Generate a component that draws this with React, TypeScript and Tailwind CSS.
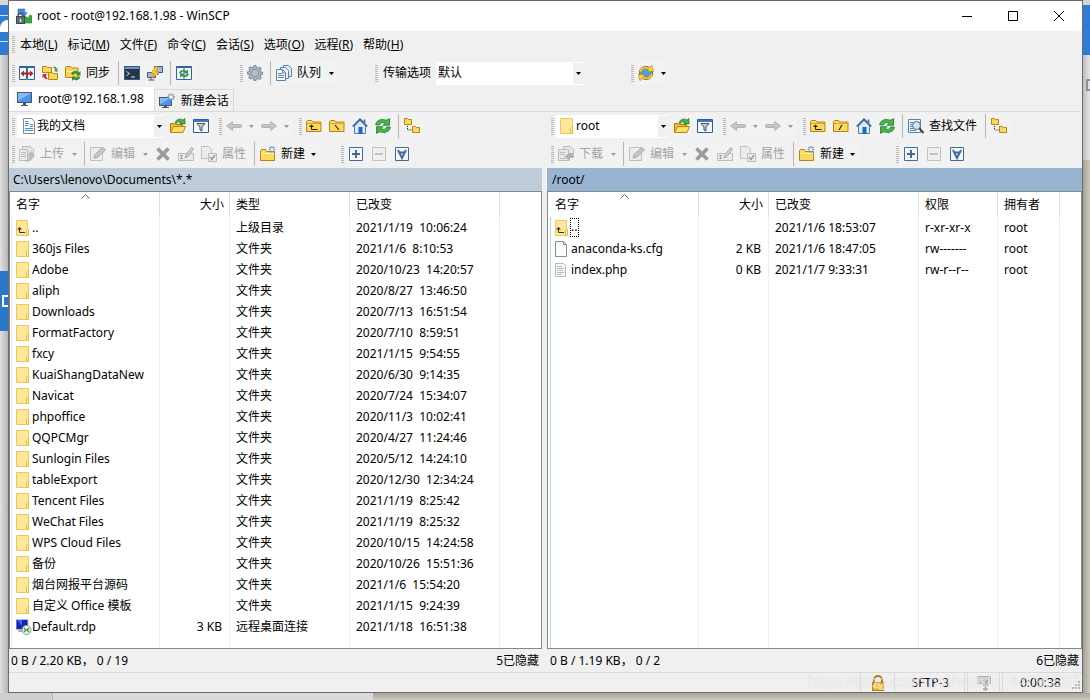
import React, { useState } from "react";

type IconProps = { children: React.ReactNode; className?: string };

const Svg = ({ children, className = "" }: IconProps) => (
  <svg viewBox="0 0 16 16" className={`w-4 h-4 shrink-0 ${className}`} fill="none" aria-hidden="true">
    {children}
  </svg>
);

/* ---------- toolbar drawings ---------- */

const goldFolder = "M.5 13.5V3.5l1-1h4l1.500 1.500h8v9.500z";

const AppIcon = () => (
  <Svg>
    <path d="M2 1h7L8 3l3 2-3 4-4-3-2 1z" fill="#3f8ae0" stroke="#2a69b5" strokeWidth=".6" />
    <path d="M7 9l2-1 3 2 2-3 2 1v7H8l2-2z" fill="#3aa83f" stroke="#237a2b" strokeWidth=".6" />
    <path d="M2 9V7.500a2.500 2.500 0 015 0V9" stroke="#555c66" strokeWidth="1.500" />
    <rect x=".5" y="8.500" width="8" height="7" fill="#616975" stroke="#414852" />
    <path d="M4.500 11v3" stroke="#e8ecf2" strokeWidth="1.500" />
  </Svg>
);
const CompareIcon = () => (
  <Svg>
    <path d="M.5 1.500h7v13h-7zM8.500 1.500h7v13h-7z" fill="#eef5fb" stroke="#31639c" />
    <path d="M.5 2h15" stroke="#31639c" strokeWidth="2" />
    <path d="M3 8.500h10" stroke="#b21f24" strokeWidth="2" />
    <path d="M1.500 8.500L5 5.500v6zM14.500 8.500L11 5.500v6z" fill="#b21f24" />
  </Svg>
);
const SyncBrowseIcon = () => (
  <Svg>
    <path d="M.5 7.500v-6h4l1 1h4v5zM6.500 14.500v-7h4l1 1h4v6z" fill="#f9d75c" stroke="#b98412" />
    <path d="M11 2c2-1 3 0 3.500 1.500l1-.5v4l-3.500-1 1-1c0-1-1-2-2-3z" fill="#43a047" />
    <path d="M1 9l4 0-1 1.500c0 2 1 3 2 3.500-2 .5-4-.5-4.500-2.500L0 13z" fill="#cc2b2b" />
  </Svg>
);
const SyncIcon = () => (
  <Svg>
    <path d="M.5 12.500V2.500l1-1h4l1.500 1.500h6v9.500z" fill="#f9d458" stroke="#b98412" />
    <path d="M2 6.500h10" stroke="#fff1ae" />
    <path d="M6 9c1-3 5-4 8-1.500L15.500 6v4.500H11L12.500 9C10.500 8 9 8.500 8.500 10zM15.500 12c-1 3-4 4-7 2.500L7 16v-4.500h4L9.700 13c1.500.5 2.800 0 3.300-1.500z" fill="#2f8f3b" />
  </Svg>
);
const TerminalIcon = () => (
  <Svg>
    <rect x=".5" y="1.500" width="15" height="13" fill="#24364b" stroke="#3c5a80" />
    <path d="M1 3h14" stroke="#7193b8" strokeWidth="2" />
    <path d="M2.500 6.500l3 2-3 2M7 12h4" stroke="#dce6f1" />
  </Svg>
);
const PuttyIcon = () => (
  <Svg>
    <path d="M7.500 1.500h8v6h-8zM.5 7.500h8v5h-8z" fill="#9dbbe0" stroke="#42597a" />
    <path d="M11 8v2M4 13v2M1.500 15h6" stroke="#42597a" />
    <path d="M8.500 1.500L4 8.500h3.500L4 14.500l8-7.500H8.500l2.500-5z" fill="#ffd62e" stroke="#c98b00" strokeWidth=".7" />
  </Svg>
);
const KeepSyncIcon = () => (
  <Svg>
    <path d="M.5 1.500h15v13H.5z" fill="#eef5fb" stroke="#31639c" />
    <path d="M.5 2h15" stroke="#31639c" strokeWidth="2" />
    <path d="M8 2v12" stroke="#31639c" />
    <path d="M3 8c1-3 5-4 7.500-2L12 4.500v4H8L9 7C7.500 6 5.500 6.500 5 8.500zM13 9c-1 3-4.500 4-7.500 2L4 12.500v-4h4L7 10c1.500 1 3.500.5 4-1.500z" fill="#2f8f3b" />
  </Svg>
);
const GearIcon = () => (
  <Svg>
    <path d="M7 .5h2l.5 2 1.500.7 1.900-1.100 1.500 1.500L13.200 5.500l.6 1.400 2 .4v2l-2 .5-.6 1.400 1.100 1.900-1.500 1.500-1.900-1.100-1.400.6L9 15.600H7l-.5-2-1.500-.6-1.900 1.100-1.500-1.500 1.100-1.900L2.200 9.300l-2-.4V7l2-.5.6-1.400L1.700 3.200l1.500-1.500L5.100 2.800l1.400-.6z" fill="#a9b4c2" stroke="#66758a" strokeWidth=".8" />
    <circle cx="8" cy="8" r="3.500" fill="#c9d1db" stroke="#77869a" />
    <circle cx="8" cy="8" r="1.200" fill="#f7f7f7" stroke="#77869a" strokeWidth=".7" />
  </Svg>
);
const QueueIcon = () => (
  <Svg>
    <path d="M7.500.5h5l3 3v8h-8z" fill="#e7f0f8" stroke="#5b82ab" />
    <path d="M4.500 2.500h5l3 3v8h-8z" fill="#e7f0f8" stroke="#5b82ab" />
    <path d="M.5 4.500h6l3 3v8h-9z" fill="#f3f8fc" stroke="#5b82ab" />
    <path d="M2 8.500h4M2 10.500h6M2 12.500h6M6.500 5v3H9" stroke="#5b82ab" />
  </Svg>
);
const GlobeIcon = () => (
  <Svg>
    <circle cx="8" cy="8" r="6.500" fill="#4c9be8" stroke="#2768ac" />
    <path d="M6 6l3-1 2 2-2 3-3-1z" fill="#59b55c" />
    <path d="M1 7C2 2 7 .5 11.500 2.500L14 .5l1.500 6H9.500l1-2C7 3 4 4 3 7.500z" fill="#ffcf3c" stroke="#b98412" strokeWidth=".7" />
    <path d="M15 9c-1 5-6 6.500-10.500 4.500L2 15.500l-1.500-6h6l-1 2C9 13 12 12 13 8.500z" fill="#ffcf3c" stroke="#b98412" strokeWidth=".7" />
    <path d="M4.500 7.500c2-3 5-2 7 1-2 3-5 2-7-1z" fill="#4c9be8" />
    <path d="M7 6.500l2 .5v2z" fill="#59b55c" />
  </Svg>
);
const ScreenIcon = () => (
  <Svg>
    <rect x=".5" y="1.500" width="14" height="10" fill="#4b94ec" stroke="#4a5665" />
    <path d="M1 2h13L1 10z" fill="#85b8f6" />
    <path d="M6 12h3v2h2v1H4v-1h2z" fill="#4a5665" />
  </Svg>
);
const NewScreenIcon = () => (
  <Svg>
    <rect x=".5" y="4.500" width="12" height="8" fill="#4b94ec" stroke="#4a5665" />
    <path d="M1 5h11L1 11z" fill="#85b8f6" />
    <path d="M5 13h3v1h2v1H3v-1h2z" fill="#4a5665" />
    <path d="M12 0v8M8 4h8M9.200 1.200l5.600 5.600M14.800 1.200L9.200 6.800" stroke="#7e99b8" strokeWidth="1.300" />
    <circle cx="12" cy="4" r="1.800" fill="#fff" />
  </Svg>
);
const DocsIcon = () => (
  <Svg>
    <path d="M2.500.5h8l3 3v12h-11z" fill="#fdfdfd" stroke="#808b96" />
    <path d="M4 3.500h3M4 5.500h4M4 7.500h3M9 6.500h3M9 8.500h3M4 10.500h8M4 12.500h8" stroke="#3296d2" />
  </Svg>
);
const OpenFolderIcon = () => (
  <Svg>
    <path d="M.5 14.500V5.500h4l1 1h7v2" fill="#f0bf32" stroke="#a97d0c" />
    <path d="M.5 14.500l3-6h12l-2.500 6z" fill="#fddf68" stroke="#b98412" />
    <path d="M5 5C6 1 10 0 13 2l2-1.500V6h-5.500L11 4.500C9 3.500 7 4 6.500 5.500z" fill="#4db04f" stroke="#27802f" strokeWidth=".7" />
  </Svg>
);
const FilterIcon = () => (
  <Svg>
    <path d="M.5 1.500h15v13H.5z" fill="#f1f7fd" stroke="#2c5f9e" />
    <path d="M1 3h14" stroke="#3e78bd" strokeWidth="2" />
    <path d="M4 5.500h8L9 9v4l-2-1V9z" fill="#c9cdd2" stroke="#50565e" />
  </Svg>
);
const ArrowLeftIcon = () => (
  <Svg>
    <path d="M.5 8L6.500 3.500V6.500h8q1 0 1 1.500t-1 1.500h-8v3z" fill="#c4c4c4" stroke="#b4b4b4" />
  </Svg>
);
const ArrowRightIcon = () => (
  <Svg>
    <path d="M15.500 8L9.500 3.500V6.500h-8q-1 0-1 1.500t1 1.500h8v3z" fill="#c4c4c4" stroke="#b4b4b4" />
  </Svg>
);
const ParentIcon = () => (
  <Svg>
    <path d={goldFolder} fill="#fbd960" stroke="#b98412" />
    <path d="M1 5.500h14" stroke="#d9a52b" />
    <path d="M5.500 11.500h6M5.500 11.500v-3" stroke="#222" />
    <path d="M3 9l2.500-2.500L8 9z" fill="#222" />
  </Svg>
);
const RootIcon = ({ flip = false }: { flip?: boolean }) => (
  <Svg>
    <path d={goldFolder} fill="#fbd960" stroke="#b98412" />
    <path d="M1 5.500h14" stroke="#d9a52b" />
    <path d={flip ? "M9 7l-3 5" : "M6 7l4 5"} stroke="#222" strokeWidth="1.200" />
  </Svg>
);
const HomeIcon = () => (
  <Svg>
    <path d="M2.500 8L8 2.500 13.500 8v7.500h-11z" fill="#dbeafb" stroke="#5d7fae" />
    <path d="M11.500 1.500h2v4l-2-2z" fill="#5d7fae" />
    <path d="M.7 8.500L8 1.200l7.300 7.300" stroke="#3d5f91" strokeWidth="1.600" />
    <path d="M6.500 9h4v7h-4z" fill="#1d69c2" />
  </Svg>
);
const RefreshIcon = () => (
  <Svg>
    <path d="M.7 7C1 2.500 6 .2 11 2.300L14.500.7v6.600H8L10 5.300C7.500 4 5 4.700 4.500 7z" fill="#45b649" stroke="#1d7d28" strokeWidth=".8" />
    <path d="M15.300 9c-.3 4.500-5.300 6.800-10.300 4.700L1.500 15.300V8.700H8L6 10.700c2.500 1.300 5 .6 5.500-1.700z" fill="#45b649" stroke="#1d7d28" strokeWidth=".8" />
  </Svg>
);
const TreeIcon = () => (
  <Svg>
    <path d="M.5 6.500v-6h3l1 1h3v5zM8.500 14.500v-6h3l1 1h3v5z" fill="#fbd960" stroke="#b98412" />
    <path d="M3.500 8v4H8" stroke="#222" strokeDasharray="1 1" />
  </Svg>
);
const FindIcon = () => (
  <Svg>
    <path d="M.5 1.500h12v13H.5z" fill="#eef4fa" stroke="#5b82ab" />
    <path d="M2 4.500h3M2 6.500h2M2 8.500h2M2 10.500h3M2 12.500h6" stroke="#5b82ab" />
    <circle cx="8.500" cy="7.500" r="4" fill="#cfe3f5" stroke="#59636f" />
    <path d="M11.500 10.500l4 4.500" stroke="#3a4654" strokeWidth="2" />
  </Svg>
);
const TransferIcon = () => (
  <Svg>
    <path d="M3.500.5h8l3 3v8h-11z" fill="#e6e6e6" stroke="#bdbdbd" />
    <path d="M.5 3.500h8v11h-8z" fill="#e9e9e9" stroke="#bdbdbd" />
    <path d="M2 6.500h5M2 8.500h5M2 10.500h5" stroke="#bdbdbd" />
    <path d="M6 14.500c3 0 4-1.500 4-5H8L12 5l4 4.500h-2c0 4.500-3 6.500-8 6z" fill="#bcbcbc" />
  </Svg>
);
const DownloadIcon = () => (
  <Svg>
    <path d="M5.500.5h7l3 3v8h-10z" fill="#e6e6e6" stroke="#bdbdbd" />
    <path d="M.5 3.500h10v11H.5z" fill="#e9e9e9" stroke="#bdbdbd" />
    <path d="M2 6.500h5M2 8.500h5M2 12.500h5" stroke="#bdbdbd" />
    <path d="M15 7v5h-3v3L6 11l5-4z" fill="#b4b4b4" />
  </Svg>
);
const EditIcon = () => (
  <Svg>
    <path d="M.5 1.500h12v13H.5z" fill="#ececec" stroke="#c0c0c0" />
    <path d="M4 12l1-3.500L13 1.500l2.500 2.500L8 11z" fill="#c6c6c6" stroke="#a9a9a9" />
  </Svg>
);
const DeleteIcon = () => (
  <Svg>
    <path d="M2.500 2.500l11 11M13.500 2.500l-11 11" stroke="#9b9b9b" strokeWidth="3.600" />
  </Svg>
);
const RenameIcon = () => (
  <Svg>
    <path d="M.5 7.500h15v7H.5z" fill="#ececec" stroke="#bcbcbc" />
    <path d="M2 9.500h3M3.500 9.500v3M2 12.500h3" stroke="#a5a5a5" />
    <path d="M7 12l1-3 5.500-7.500L15.500 3 10 10.500z" fill="#d2d2d2" stroke="#a9a9a9" />
  </Svg>
);
const PropsIcon = () => (
  <Svg>
    <path d="M.5.500h7l3 3v9H.5z" fill="#ececec" stroke="#c0c0c0" />
    <path d="M7.500 7.500h8v8h-8z" fill="#ececec" stroke="#bcbcbc" />
    <path d="M9 11l2 2.500L14 9" stroke="#999" strokeWidth="1.500" />
  </Svg>
);
const NewFolderIcon = () => (
  <Svg>
    <path d="M.5 14.500V4.500l1-1h4l1 2h8v9z" fill="#fbd960" stroke="#b98412" />
    <path d="M1 7.500h13" stroke="#fff1ae" />
    <path d="M12 0v7M8.500 3.500h7M9.500 1l5 5M14.500 1l-5 5" stroke="#7691b3" strokeWidth="1.200" />
    <circle cx="12" cy="3.500" r="1.500" fill="#fff" />
  </Svg>
);
const BoxIcon = ({ kind }: { kind: "plus" | "minus" | "all" }) => (
  <Svg>
    <path d="M1.500 1.500h13v13h-13z" fill={kind === "minus" ? "#efefef" : "#f2f7fc"} stroke={kind === "minus" ? "#c2c2c2" : "#446a99"} />
    {kind === "plus" && <path d="M4 8h8M8 4v8" stroke="#446a99" strokeWidth="2" />}
    {kind === "minus" && <path d="M4 8h8" stroke="#c2c2c2" strokeWidth="2" />}
    {kind === "all" && <path d="M4 4l4 8 4-8M5 6.500h6" stroke="#446a99" strokeWidth="2" />}
  </Svg>
);

/* ---------- file list drawings ---------- */

const FolderIcon = () => (
  <Svg>
    <path d="M.5.500h12v15H.5z" fill="#ffe699" stroke="#eac95c" />
    <path d="M10.500 15.500v-5l1-1h1v6z" fill="#fff0b8" stroke="#e5bb3c" />
  </Svg>
);
const UpFolderIcon = () => (
  <Svg>
    <path d="M.5.500h11v15H.5z" fill="#ffe699" stroke="#eac95c" />
    <path d="M10.500 15.500v-5l1-1h1v6z" fill="#fff0b8" stroke="#e5bb3c" />
    <path d="M3.500 12.500H9M3.500 12.500V9" stroke="#333" />
    <path d="M1 9.500L3.500 7 6 9.500z" fill="#333" />
  </Svg>
);
const RdpIcon = () => (
  <Svg>
    <rect x="0" y=".5" width="12" height="10" fill="#1326b5" stroke="#b9bfca" />
    <path d="M1 1h5v6z" fill="#3d63ee" />
    <path d="M3 11h5v2H2z" fill="#a5adb9" />
    <circle cx="10.500" cy="11" r="4.500" fill="#eef1ee" stroke="#8f9a93" />
    <path d="M8 9l2 2-2 2M13 9l-2 2 2 2" stroke="#2a9136" strokeWidth="1.200" />
  </Svg>
);
const BlankFileIcon = () => (
  <Svg>
    <path d="M.5.500h8l3 3v12H.5z" fill="#fbfbfb" stroke="#8c8c8c" />
    <path d="M8.500.500v3h3" stroke="#8c8c8c" />
  </Svg>
);
const TextFileIcon = () => (
  <Svg>
    <path d="M.5 1.500h8l2 2v11H.5z" fill="#fbfbfb" stroke="#b9b9b9" />
    <path d="M2 4.500h5M2 6.500h7M2 8.500h6M2 10.500h7M2 12.500h5" stroke="#b3bac2" />
  </Svg>
);

/* ---------- toolbar parts ---------- */

const Grip = ({ className = "" }: { className?: string }) => (
  <span className={`w-[3px] h-[17px] mr-px shrink-0 bg-[repeating-linear-gradient(to_bottom,#b9b9b9_0_1px,transparent_1px_2px)] ${className}`} />
);
const Sep = () => <span className="w-px h-6 ml-[3px] mr-[2px] shrink-0 bg-[#b8b8b8]" />;
const Caret = ({ muted = false }: { muted?: boolean }) => (
  <svg viewBox="0 0 5 3" className="w-[5px] h-[3px] shrink-0" aria-hidden="true">
    <path d="M0 0h5L2.500 3z" fill={muted ? "#9a9a9a" : "#000"} />
  </svg>
);

interface ToolProps {
  icon: React.ReactNode;
  name: string;
  label?: string;
  split?: boolean;
  menu?: boolean;
  disabled?: boolean;
}

function Tool({ icon, name, label, split, menu, disabled }: ToolProps) {
  return (
    <button
      type="button"
      aria-label={name}
      title={name}
      disabled={disabled}
      className={`flex items-center h-6 pl-[3px] pr-1 shrink-0 whitespace-nowrap bg-[#f2f2f2] ${disabled ? "text-[#a3a3a3]" : "text-black"}`}
    >
      {icon}
      {label && <span className="ml-[5px] mr-px">{label}</span>}
      {split && <span className="ml-[7px] flex"><Caret muted={disabled} /></span>}
      {menu && <span className="ml-[5px] flex"><Caret /></span>}
    </button>
  );
}

interface ComboProps {
  name: string;
  value: string;
  icon?: React.ReactNode;
  className: string;
}

function Combo({ name, value, icon, className }: ComboProps) {
  return (
    <label className={`flex items-center h-[23px] bg-white shrink-0 ${className}`}>
      {icon}
      <select aria-label={name} className="appearance-none flex-1 min-w-0 bg-white outline-none">
        <option>{value}</option>
      </select>
      <span className="w-[11px] h-[21px] bg-[#f0f0f0] flex items-center justify-center">
        <Caret />
      </span>
    </label>
  );
}

function PaneToolbars({ remote = false }: { remote?: boolean }) {
  const pad = remote ? "pl-1" : "pl-[3px]";
  return (
    <div className="overflow-hidden">
      <div className={`flex items-center h-7 ${pad}`}>
        <Grip />
        {remote ? (
          <Combo name="远程目录" value="root" icon={<FolderIcon />} className="w-[113px] ml-px pl-1" />
        ) : (
          <Combo name="本地目录" value="我的文档" icon={<DocsIcon />} className="w-[148px] ml-px pl-1" />
        )}
        <span className="w-[2px] shrink-0" />
        <Tool icon={<OpenFolderIcon />} name="打开目录" />
        <Tool icon={<FilterIcon />} name="过滤" />
        <Grip className="ml-[6px]" />
        <Tool icon={<ArrowLeftIcon />} name="后退" split disabled />
        <Tool icon={<ArrowRightIcon />} name="前进" split disabled />
        <Grip className="ml-[6px]" />
        <Tool icon={<ParentIcon />} name="上级目录" />
        <Tool icon={<RootIcon flip={remote} />} name="根目录" />
        <Tool icon={<HomeIcon />} name="主目录" />
        <Tool icon={<RefreshIcon />} name="刷新" />
        <Sep />
        {remote && (
          <>
            <Tool icon={<FindIcon />} name="查找文件" label="查找文件" />
            <Sep />
          </>
        )}
        <Tool icon={<TreeIcon />} name="目录树" />
      </div>
      <div className={`flex items-center h-7 ${pad}`}>
        <Grip />
        {remote ? (
          <Tool icon={<DownloadIcon />} name="下载" label="下载" split disabled />
        ) : (
          <Tool icon={<TransferIcon />} name="上传" label="上传" split disabled />
        )}
        <Sep />
        <Tool icon={<EditIcon />} name="编辑" label="编辑" split disabled />
        <Tool icon={<DeleteIcon />} name="删除" disabled />
        <Tool icon={<RenameIcon />} name="重命名" disabled />
        <Tool icon={<PropsIcon />} name="属性" label="属性" disabled />
        <Sep />
        <Tool icon={<NewFolderIcon />} name="新建" label="新建" menu />
        <Grip className={remote ? "ml-[37px]" : "ml-[21px]"} />
        <Tool icon={<BoxIcon kind="plus" />} name="选择" />
        <Tool icon={<BoxIcon kind="minus" />} name="取消选择" disabled />
        <Tool icon={<BoxIcon kind="all" />} name="全选" />
      </div>
    </div>
  );
}

/* ---------- data ---------- */

const menus = [
  ["本地", "L"],
  ["标记", "M"],
  ["文件", "F"],
  ["命令", "C"],
  ["会话", "S"],
  ["选项", "O"],
  ["远程", "R"],
  ["帮助", "H"],
];

interface Row {
  icon: React.ReactNode;
  cells: string[];
  focused?: boolean;
}

const localFolders = [
  ["360js Files", "2021/1/6  8:10:53"],
  ["Adobe", "2020/10/23  14:20:57"],
  ["aliph", "2020/8/27  13:46:50"],
  ["Downloads", "2020/7/13  16:51:54"],
  ["FormatFactory", "2020/7/10  8:59:51"],
  ["fxcy", "2021/1/15  9:54:55"],
  ["KuaiShangDataNew", "2020/6/30  9:14:35"],
  ["Navicat", "2020/7/24  15:34:07"],
  ["phpoffice", "2020/11/3  10:02:41"],
  ["QQPCMgr", "2020/4/27  11:24:46"],
  ["Sunlogin Files", "2020/5/12  14:24:10"],
  ["tableExport", "2020/12/30  12:34:24"],
  ["Tencent Files", "2021/1/19  8:25:42"],
  ["WeChat Files", "2021/1/19  8:25:32"],
  ["WPS Cloud Files", "2020/10/15  14:24:58"],
  ["备份", "2020/10/26  15:51:36"],
  ["烟台网报平台源码", "2021/1/6  15:54:20"],
  ["自定义 Office 模板", "2021/1/15  9:24:39"],
];

const localRows: Row[] = [
  { icon: <UpFolderIcon />, cells: ["..", "", "上级目录", "2021/1/19  10:06:24"] },
  ...localFolders.map(([name, date]) => ({
    icon: <FolderIcon />,
    cells: [name, "", "文件夹", date],
  })),
  { icon: <RdpIcon />, cells: ["Default.rdp", "3 KB", "远程桌面连接", "2021/1/18  16:51:38"] },
];

const remoteRows: Row[] = [
  { icon: <UpFolderIcon />, cells: ["..", "", "2021/1/6 18:53:07", "r-xr-xr-x", "root"], focused: true },
  { icon: <BlankFileIcon />, cells: ["anaconda-ks.cfg", "2 KB", "2021/1/6 18:47:05", "rw-------", "root"] },
  { icon: <TextFileIcon />, cells: ["index.php", "0 KB", "2021/1/7 9:33:31", "rw-r--r--", "root"] },
];

const localCols = [
  { title: "名字", width: "w-[149px]" },
  { title: "大小", width: "w-[70px]" },
  { title: "类型", width: "w-[120px]" },
  { title: "已改变", width: "w-[150px]" },
];
const remoteCols = [
  { title: "名字", width: "w-[149px]" },
  { title: "大小", width: "w-[70px]" },
  { title: "已改变", width: "w-[150px]" },
  { title: "权限", width: "w-[79px]" },
  { title: "拥有者", width: "w-[62px]" },
];

interface FileListProps {
  cols: { title: string; width: string }[];
  rows: Row[];
  active?: boolean;
}

function FileList({ cols, rows, active }: FileListProps) {
  // the guide line left of the names is stronger in the active pane
  const guide = active ? "border-l border-l-[#b5d3f5]" : "border-l border-l-[#dfe8f5]";

  return (
    <div className={`flex-1 flex bg-white border border-[#828790] overflow-hidden ${active ? "pl-[2px]" : "pl-px"}`}>
      <table className="w-full table-fixed border-separate border-spacing-0 text-left whitespace-pre">
        <colgroup>
          {cols.map((col) => (
            <col key={col.title} className={col.width} />
          ))}
          <col />
        </colgroup>
        <thead>
          <tr className="h-[25px]">
            {cols.map((col, i) => (
              <th
                key={col.title}
                className={`relative p-0 font-normal border-r border-[#e0e0e0] ${i === 1 ? "pr-[5px] text-right" : i === 0 ? "pl-[5px]" : "pl-[6px]"}`}
              >
                {i === 0 && (
                  <svg viewBox="0 0 9 5" className="absolute top-[2px] left-[70px] w-[9px] h-[5px]" fill="none" aria-hidden="true">
                    <path d="M.5 4.500l4-4 4 4" stroke="#666" />
                  </svg>
                )}
                {col.title}
              </th>
            ))}
            <th className="p-0" />
          </tr>
        </thead>
        <tbody>
          {rows.map((row) => (
            <tr key={row.cells[0]} className="h-[21px]">
              {row.cells.map((cell, i) => (
                <td
                  key={i}
                  className={`p-0 border-r border-r-[#e8f1fb] ${i === 1 ? "pr-[7px] text-right" : i === 0 ? `pl-1 ${guide}` : "pl-[6px]"}`}
                >
                  {i === 0 ? (
                    <span className="flex items-center h-[21px]">
                      {row.icon}
                      <span className={row.focused ? "outline-1 outline-dotted outline-black leading-4 h-[17px] pr-px" : ""}>{cell}</span>
                    </span>
                  ) : (
                    cell
                  )}
                </td>
              ))}
              <td className="p-0" />
            </tr>
          ))}
          <tr>
            {cols.map((col, i) => (
              <td key={col.title} className={`p-0 border-r border-r-[#e8f1fb] ${i === 0 ? guide : ""}`} />
            ))}
            <td className="p-0" />
          </tr>
        </tbody>
      </table>
    </div>
  );
}

/* Slivers of the page behind the window */
function LeftBackdrop() {
  return (
    <div className="w-2 shrink-0 overflow-hidden flex flex-col bg-linear-to-r from-[#e2e2e2] to-[#b5b5b5]">
      <div className="h-[5px] bg-[#d8d8d8]" />
      <div className="h-[50px] pt-[10px] bg-[#2f7cd0]">
        <div className="h-px bg-[#cfe0f4]" />
        <div className="mt-1 w-2 h-3 bg-white rounded-tl-full" />
        <div className="mt-[9px] h-px bg-[#cfe0f4]" />
      </div>
      <div className="h-[216px]" />
      <div className="h-[60px] flex items-center pl-[2px] bg-[#2877c9]">
        <div className="w-4 h-3 shrink-0 border-2 border-white" />
      </div>
    </div>
  );
}

function RightBackdrop() {
  return (
    <div className="w-[7px] shrink-0 flex flex-col">
      <div className="h-[5px] bg-[#d4d4d4]" />
      <div className="h-[50px] bg-[#2f7cd6]" />
      <div className="h-[105px] pt-6 bg-linear-to-r from-[#bdbdbd] to-[#e6e6e6] overflow-hidden">
        <div className="ml-[3px] w-4 h-3 border-2 border-[#8792a3]" />
      </div>
      <div className="flex-1 bg-linear-to-r from-[#a5a197] to-[#cfcabe]" />
    </div>
  );
}

export default function App() {
  const [tab, setTab] = useState(0);

  return (
    <div className="relative min-h-screen flex flex-col bg-[#cdc9be] text-xs leading-4 text-black font-['Noto_Sans','Noto_Sans_CJK_SC',sans-serif]">
      <div className="flex-1 flex">
        <LeftBackdrop />

        <main className="flex-1 min-w-0 flex flex-col bg-[#f0f0f0] border border-[#6b6b6b]">
          {/* Title bar */}
          <header className="flex items-center h-[30px] pl-[7px] bg-white">
            <AppIcon />
            <h1 className="ml-[5px] flex-1">root - root@192.168.1.98 - WinSCP</h1>
            <button type="button" aria-label="最小化" className="w-[46px] h-full flex items-center justify-center">
              <svg viewBox="0 0 10 10" className="w-[10px] h-[10px]"><path d="M0 5.500h10" stroke="#000" /></svg>
            </button>
            <button type="button" aria-label="最大化" className="w-[46px] h-full flex items-center justify-center">
              <svg viewBox="0 0 10 10" className="w-[10px] h-[10px]" fill="none"><path d="M.5.500h9v9h-9z" stroke="#000" /></svg>
            </button>
            <button type="button" aria-label="关闭" className="w-[46px] h-full flex items-center justify-center">
              <svg viewBox="0 0 10 10" className="w-[10px] h-[10px]"><path d="M0 0l10 10M10 0L0 10" stroke="#000" /></svg>
            </button>
          </header>

          {/* Menu */}
          <nav className="flex items-center h-[27px] pl-[3px]">
            <Grip />
            <div className="flex gap-[10px] ml-1">
              {menus.map(([label, key]) => (
                <button key={key} type="button" className="whitespace-nowrap">
                  {label}(<u>{key}</u>)
                </button>
              ))}
            </div>
          </nav>

          {/* Main toolbar */}
          <div className="flex items-center h-[30px] pl-[3px]">
            <Grip />
            <Tool icon={<CompareIcon />} name="比较目录" />
            <Tool icon={<SyncBrowseIcon />} name="同步浏览" />
            <Tool icon={<SyncIcon />} name="同步" label="同步" />
            <Sep />
            <Tool icon={<TerminalIcon />} name="打开终端" />
            <Tool icon={<PuttyIcon />} name="在 PuTTY 中打开" />
            <Sep />
            <Tool icon={<KeepSyncIcon />} name="保持远程目录最新" />
            <Grip className="ml-11" />
            <Tool icon={<GearIcon />} name="选项" />
            <Sep />
            <Tool icon={<QueueIcon />} name="队列" label="队列" split />
            <Grip className="ml-[37px]" />
            <span className="ml-1 mr-[5px] whitespace-nowrap">传输选项</span>
            <Combo name="传输选项" value="默认" className="w-[148px] pl-[2px]" />
            <Grip className="ml-[47px]" />
            <Tool icon={<GlobeIcon />} name="检查更新" split />
          </div>

          {/* Session tabs */}
          <div role="tablist" className="flex items-end h-6 mr-[2px] border-b border-[#dadada]">
            <button
              type="button"
              role="tab"
              aria-selected={tab === 0}
              onClick={() => setTab(0)}
              className="flex items-center h-6 pl-2 pr-[10px] gap-[5px] bg-white whitespace-nowrap"
            >
              <ScreenIcon />
              root@192.168.1.98
            </button>
            <button
              type="button"
              role="tab"
              aria-selected={tab === 1}
              onClick={() => setTab(1)}
              className="flex items-center h-[22px] px-1 gap-[6px] border border-b-0 border-[#dadada] whitespace-nowrap"
            >
              <NewScreenIcon />
              新建会话
            </button>
          </div>

          {/* Panes */}
          <div className="flex-1 grid grid-cols-[533fr_535fr] gap-x-[5px]">
            <section className="min-w-0 flex flex-col" aria-label="本地">
              <PaneToolbars />
              <div className="h-[23px] flex items-center pl-1 bg-[#bfcddb]">C:\Users\lenovo\Documents\*.*</div>
              <FileList cols={localCols} rows={localRows} />
              <div className="h-[23px] flex items-center justify-between pl-[2px] pr-[3px] whitespace-pre">
                <span>0 B / 2.20 KB， 0 / 19</span>
                <span>5已隐藏</span>
              </div>
            </section>
            <section className="min-w-0 flex flex-col" aria-label="远程">
              <PaneToolbars remote />
              <div className="h-[23px] flex items-center pl-[5px] bg-[#99b4d1]">/root/</div>
              <FileList cols={remoteCols} rows={remoteRows} active />
              <div className="h-[23px] flex items-center justify-between pl-[3px] pr-[3px] whitespace-pre">
                <span>0 B / 1.19 KB， 0 / 2</span>
                <span>6已隐藏</span>
              </div>
            </section>
          </div>

          {/* Status bar */}
          <footer className="flex justify-end h-5 border-t border-[#dadada] gap-[2px]">
            <div className="w-[35px] flex items-center justify-center border-x border-[#dadada]">
              <Svg>
                <path d="M4 8V5a4 4 0 018 0v3" stroke="#b07d17" strokeWidth="2" />
                <rect x="2.500" y="7.500" width="11" height="8" fill="#f5b92e" stroke="#b07d17" />
                <path d="M4 10.500h8M4 12.500h8" stroke="#ffdf83" />
              </Svg>
            </div>
            <div className="w-[68px] flex items-center justify-center border-r border-[#dadada]">SFTP-3</div>
            <div className="w-[33px] flex items-center justify-center border-x border-[#dadada]">
              <Svg>
                <path d="M1.500 1.500h13v7h-13z" fill="#d0d0d0" stroke="#b3b3b3" />
                <path d="M9.500 4v12M7 6h5M7 10h5M7 14h5" stroke="#a3a3a3" strokeWidth="1.500" />
              </Svg>
            </div>
            <div className="w-[80px] flex items-end justify-between pl-[17px] border-l border-[#dadada]">
              <span className="self-center">0:00:38</span>
              <svg viewBox="0 0 10 10" className="w-[10px] h-[10px] mb-px" aria-hidden="true">
                <path d="M6 0h2v2H6zM3 3h2v2H3zM6 3h2v2H6zM0 6h2v2H0zM3 6h2v2H3zM6 6h2v2H6z" fill="#b5b5b5" />
              </svg>
            </div>
          </footer>
        </main>

        <RightBackdrop />
      </div>

      {/* Page below the window */}
      <div className="h-[7px] flex">
        <div className="w-[53px] bg-[#cfcfcf] border-r border-[#b5b5b5]" />
        <div className="w-80 bg-[#dadada]" />
        <div className="flex-1 bg-linear-to-b from-[#aaa69c] to-[#cdc9be]" />
      </div>

      <span className="absolute right-[10px] bottom-[8px] text-base leading-5 text-white/50 font-['Liberation_Sans',sans-serif] [text-shadow:0_0_1px_#bbbbbb80] pointer-events-none">
        https://blog.csdn.net/weixin_44095587
      </span>
    </div>
  );
}
